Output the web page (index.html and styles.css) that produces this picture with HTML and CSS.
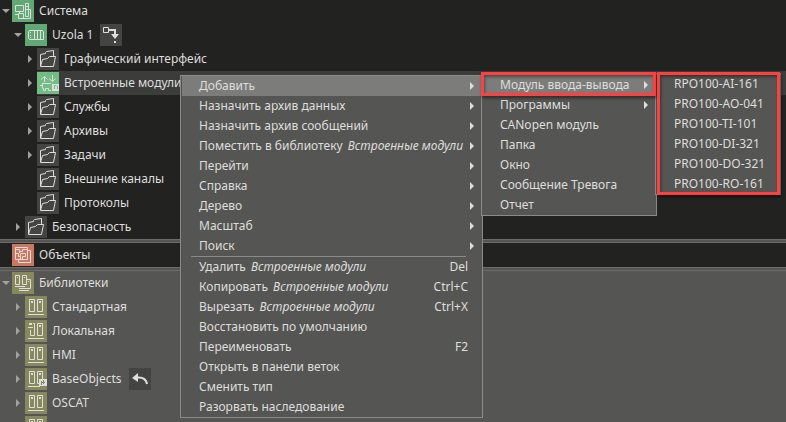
FILE: index.html
```
<!DOCTYPE html>
<html lang="ru">
<head>
    <meta charset="utf-8">
    <title>Система</title>
    <link rel="stylesheet" href="styles.css">
</head>
<body>
    <svg class="sprite">
        <symbol id="folder" viewBox="0 0 22 22">
            <path d="M3.500 18V6.500L8.500 5.500V4.500L9.500 3.500L16.500 2.500V8M3.500 18.500H16.500L18.500 8.500H12.500L10.500 10.500L5.500 11.500L3.500 18.500"/>
        </symbol>
        <symbol id="system" viewBox="0 0 22 22">
            <path d="M3.500 5.500H11.500V11.500H3.500ZM7.500 12V14M13.500 3.500H16.500V16.500H13.500ZM14 6.500H16M14 9.500H16M6.500 13.500H11.500V18.500H6.500ZM3 14.500H6M11 18.500H18.500V9.500H17"/>
        </symbol>
        <symbol id="plc" viewBox="0 0 22 22">
            <path d="M4.500 6.500H17.500L18.500 8V15.500H4.500L3.500 14V8ZM9.500 7V15M12.500 7V15M15.500 7V15M5 8.500H6M5 11.500H6M5 13.500H6"/>
        </symbol>
        <symbol id="modules" viewBox="0 0 22 22">
            <path d="M4 7.500L7.500 4.500L10.500 7.500M7.500 5V10M12 6.500L15.500 9.500L18.500 6.500M15.500 3V9M5.500 11V16.500M5 11.500H14M3 13.500H5M6.500 16V18.500H8.500V16.500H11.500V18.500H14"/>
            <path class="solid" d="M15 12H22V19H15Z"/>
            <path class="cut-green" d="M17.500 17V13.500H19.500M20.500 17V14"/>
        </symbol>
        <symbol id="objects" viewBox="0 0 22 22">
            <path d="M3.500 3.500H15.500V15.500H3.500ZM16 6.500H18.500V18.500H6.500V16M4 5.500H7.500V7.500H10.500V5.500H15M4 9.500H6.500V12.500H8.500V9.500H13.500V12.500H10.500V15M8.500 12.500V15M7.500 7.500V9"/>
        </symbol>
        <symbol id="libs" viewBox="0 0 22 22">
            <path d="M3.500 3.500H7.500V12.500H3.500ZM10.500 3.500H14.500V12.500H10.500ZM14.500 7.500H18.500V16.500H14.500M3 14.500H13M7 16.500H15M7 18.500H17M5 5.500H6M12 5.500H13M16 9.500H17"/>
        </symbol>
        <symbol id="lib" viewBox="0 0 22 22">
            <path d="M4.500 3.500H9.500V15.500H4.500ZM12.500 3.500H17.500V15.500H12.500ZM3 18.500H19"/>
            <path class="solid" d="M6 5H8V7H6ZM14 5H16V7H14Z"/>
        </symbol>
        <symbol id="lib-local" viewBox="0 0 22 22">
            <path d="M8 3.500H9.500V15.500H5.500V10M12.500 3.500H17.500V15.500H12.500ZM3 18.500H19M3 7.500H8"/>
            <path class="solid" d="M4 3H7V5H4ZM14 5H16V7H14Z"/>
        </symbol>
        <symbol id="lib-base" viewBox="0 0 22 22">
            <path d="M4.500 3.500H9.500V15.500H4.500ZM12.500 3.500H17.500V15.500H12.500ZM3 18.500H15"/>
            <path class="solid" d="M6 5H8V7H6ZM14 5H16V7H14ZM14 11H22V18H14Z"/>
            <path class="cut-olive" d="M16.500 13V17M18.500 12V16M16 14.500H20"/>
        </symbol>
        <symbol id="link" viewBox="0 0 22 22">
            <path d="M3.500 3.500H8.500V8.500H3.500Z"/>
            <path class="thick" d="M9 6H15V11"/>
            <path class="solid" d="M11 10H19L15 15ZM14 17H16V19H14Z"/>
        </symbol>
        <symbol id="undo" viewBox="0 0 22 22">
            <path class="thick" d="M8 9.500C13 9 17 10 18 16"/>
            <path class="solid" d="M3 10L9 5V14Z"/>
        </symbol>
    </svg>

    <main class="workspace">
        <ul class="tree dark first">
            <li class="row"><button class="arrow open" aria-label="Свернуть"></button><div class="node"><svg class="icon green"><use href="#system"/></svg>Система</div></li>
            <li class="row level1"><button class="arrow open" aria-label="Свернуть"></button><div class="node"><svg class="icon green"><use href="#plc"/></svg>Uzola 1<button class="action" aria-label="Ссылка"><svg class="icon"><use href="#link"/></svg></button></div></li>
            <li class="row level2"><button class="arrow" aria-label="Развернуть"></button><div class="node"><svg class="icon"><use href="#folder"/></svg>Графический интерфейс</div></li>
            <li class="row level2"><button class="arrow" aria-label="Развернуть"></button><div class="node selected"><svg class="icon lime"><use href="#modules"/></svg>Встроенные модули</div></li>
            <li class="row level2"><button class="arrow" aria-label="Развернуть"></button><div class="node"><svg class="icon"><use href="#folder"/></svg>Службы</div></li>
            <li class="row level2"><button class="arrow" aria-label="Развернуть"></button><div class="node"><svg class="icon"><use href="#folder"/></svg>Архивы</div></li>
            <li class="row level2"><button class="arrow" aria-label="Развернуть"></button><div class="node"><svg class="icon"><use href="#folder"/></svg>Задачи</div></li>
            <li class="row level2"><span class="arrow none"></span><div class="node"><svg class="icon"><use href="#folder"/></svg>Внешние каналы</div></li>
            <li class="row level2"><span class="arrow none"></span><div class="node"><svg class="icon"><use href="#folder"/></svg>Протоколы</div></li>
            <li class="row level1"><button class="arrow" aria-label="Развернуть"></button><div class="node"><svg class="icon"><use href="#folder"/></svg>Безопасность</div></li>
        </ul>
        <div class="splitter"></div>
        <ul class="tree dark">
            <li class="row"><span class="arrow none"></span><div class="node"><svg class="icon red"><use href="#objects"/></svg>Объекты</div></li>
        </ul>
        <div class="splitter"></div>
        <ul class="tree">
            <li class="row"><button class="arrow open" aria-label="Свернуть"></button><div class="node"><svg class="icon olive"><use href="#libs"/></svg>Библиотеки</div></li>
            <li class="row level1"><button class="arrow" aria-label="Развернуть"></button><div class="node"><svg class="icon olive"><use href="#lib"/></svg>Стандартная</div></li>
            <li class="row level1"><button class="arrow" aria-label="Развернуть"></button><div class="node"><svg class="icon olive"><use href="#lib-local"/></svg>Локальная</div></li>
            <li class="row level1"><button class="arrow" aria-label="Развернуть"></button><div class="node"><svg class="icon olive"><use href="#lib"/></svg>HMI</div></li>
            <li class="row level1"><button class="arrow" aria-label="Развернуть"></button><div class="node"><svg class="icon olive"><use href="#lib-base"/></svg>BaseObjects<button class="action" aria-label="Назад"><svg class="icon"><use href="#undo"/></svg></button></div></li>
            <li class="row level1"><button class="arrow" aria-label="Развернуть"></button><div class="node"><svg class="icon olive"><use href="#lib"/></svg>OSCAT</div></li>
            <li class="row level1"><span class="arrow none"></span><div class="node"><svg class="icon olive"><use href="#lib"/></svg></div></li>
        </ul>
    </main>

    <div class="menu menu-main">
        <button class="item sub active">Добавить</button>
        <button class="item sub">Назначить архив данных</button>
        <button class="item sub">Назначить архив сообщений</button>
        <button class="item sub">Поместить в библиотеку <i>Встроенные модули</i></button>
        <button class="item sub">Перейти</button>
        <button class="item sub">Справка</button>
        <button class="item sub">Дерево</button>
        <button class="item sub">Масштаб</button>
        <button class="item sub">Поиск</button>
        <hr>
        <button class="item">Удалить <i>Встроенные модули</i><kbd>Del</kbd></button>
        <button class="item">Копировать <i>Встроенные модули</i><kbd>Ctrl+C</kbd></button>
        <button class="item">Вырезать <i>Встроенные модули</i><kbd>Ctrl+X</kbd></button>
        <button class="item">Восстановить по умолчанию</button>
        <button class="item">Переименовать<kbd>F2</kbd></button>
        <button class="item">Открыть в панели веток</button>
        <button class="item">Сменить тип</button>
        <button class="item">Разорвать наследование</button>
    </div>

    <div class="menu menu-add">
        <button class="item sub active">Модуль ввода-вывода</button>
        <button class="item sub">Программы</button>
        <button class="item">CANopen модуль</button>
        <button class="item">Папка</button>
        <button class="item">Окно</button>
        <button class="item">Сообщение Тревога</button>
        <button class="item">Отчет</button>
    </div>

    <div class="menu menu-modules">
        <button class="item">RPO100-AI-161</button>
        <button class="item">PRO100-AO-041</button>
        <button class="item">PRO100-TI-101</button>
        <button class="item">PRO100-DI-321</button>
        <button class="item">PRO100-DO-321</button>
        <button class="item">PRO100-RO-161</button>
    </div>

    <div class="frame frame-item"></div>
    <div class="frame frame-list"></div>
</body>
</html>
```

FILE: styles.css
```
* {
    box-sizing: border-box;
}
html, body {
    height: 100%;
}
body {
    margin: 0;
    overflow: hidden;
    background-color: #555553;
    color: #dededc;
    font-family: "Noto Sans", "Open Sans", sans-serif;
    font-size: 12px;
    line-height: 20px;
}
button {
    margin: 0;
    padding: 0;
    border: none;
    background: none;
    color: inherit;
    font: inherit;
    text-align: left;
}
.sprite {
    display: none;
}

/* Tree */
.tree {
    margin: 0;
    padding: 0;
    list-style: none;
}
.first {
    margin-top: -1px;
}
.dark {
    background-color: #222221;
}
.row {
    display: flex;
    height: 24px;
}
.level1 {
    gap: 1px;
    padding-left: 12px;
}
.level2 {
    gap: 1px;
    padding-left: 24px;
}
.node {
    display: flex;
    flex: 1;
    align-items: center;
    gap: 5px;
    white-space: nowrap;
}
.selected {
    background-color: #3c3c3b;
}
.arrow {
    width: 12px;
    display: flex;
    align-items: center;
    justify-content: center;
}
.arrow::before {
    content: "";
    width: 4px;
    height: 8px;
    background-color: #a2a2a0;
    clip-path: polygon(0 0, 100% 50%, 0 100%);
}
.arrow.open::before {
    width: 8px;
    height: 4px;
    clip-path: polygon(0 0, 100% 0, 50% 100%);
}
.arrow.none::before {
    display: none;
}
.icon {
    display: block;
    width: 22px;
    height: 22px;
    background-color: #444443;
    fill: none;
    stroke: #dededc;
}
.green { background-color: #62a874; }
.lime { background-color: #72bd84; }
.red { background-color: #cc7764; }
.olive { background-color: #88885f; }
.solid {
    fill: #dededc;
    stroke: none;
}
.thick {
    stroke-width: 2;
}
.cut-green { stroke: #72bd84; }
.cut-olive { stroke: #88885f; }
.action {
    margin-left: 2px;
}
.splitter {
    height: 4px;
    background-color: #555553;
    border-top: 1px solid #6c6c6a;
    border-bottom: 1px solid #6c6c6a;
}

/* Context menus */
.menu {
    position: absolute;
    display: flex;
    flex-direction: column;
    padding: 0 1px;
    background-color: #555553;
    border: 1px solid #8a8a88;
}
.menu-main {
    left: 180px;
    top: 75px;
    width: 303px;
}
.menu-add {
    left: 481px;
    top: 74px;
    width: 176px;
}
.menu-modules {
    left: 655px;
    top: 73px;
    width: 126px;
}
.item {
    display: flex;
    align-items: center;
    height: 20px;
    padding: 0 13px 0 17px;
    white-space: pre;
}
.item i {
    margin-left: 2px;
}
.active {
    background-color: #7c7c7a;
}
.sub {
    padding-right: 7px;
}
.sub::after {
    content: "";
    width: 4px;
    height: 8px;
    margin-left: auto;
    background-color: #dededc;
    clip-path: polygon(0 0, 100% 50%, 0 100%);
}
.item kbd {
    margin-left: auto;
    font: inherit;
}
.menu hr {
    width: 275px;
    margin: 0 9px;
    border: none;
    border-top: 1px solid #8a8a88;
}

/* Red highlight frames */
.frame {
    position: absolute;
    border: 3px solid #fc4140;
    box-shadow: 1px 2px 3px rgba(0, 0, 0, 0.5), inset 1px 2px 3px rgba(0, 0, 0, 0.4);
    pointer-events: none;
}
.frame-item {
    left: 481px;
    top: 72px;
    width: 175px;
    height: 24px;
}
.frame-list {
    left: 657px;
    top: 72px;
    width: 123px;
    height: 123px;
}
```
